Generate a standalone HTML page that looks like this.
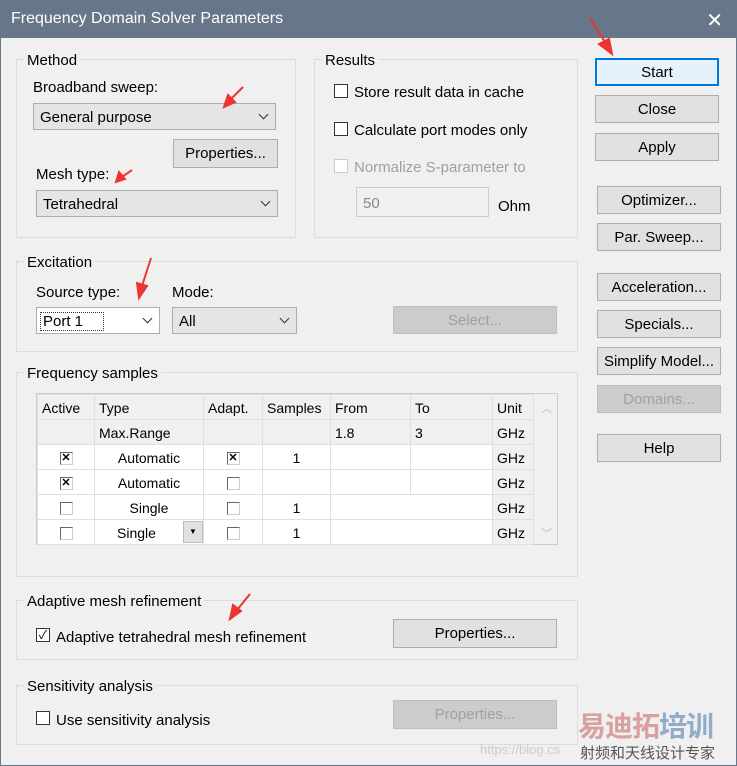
<!DOCTYPE html>
<html><head><style>
*{box-sizing:border-box;margin:0;padding:0}
body{width:737px;height:766px;background:#f0f0f0;font-family:"Liberation Sans","Noto Sans CJK SC",sans-serif;font-size:15px;color:#000;position:relative;overflow:hidden}
.a{position:absolute}
.t{margin-top:2px}
.win{position:absolute;left:0;top:0;width:737px;height:766px;border:1px solid #677689}
.title{left:0;top:0;width:737px;height:38px;background:#677689;color:#fff;font-size:16px;padding:10px 0 0 11px}
.gb{position:absolute;border:1px solid #dcdcdc}
.gl{position:absolute;background:#f0f0f0;padding:0 3px;font-size:15px;margin-top:2px}
.btn{position:absolute;background:#e1e1e1;border:1px solid #adadad;text-align:center;font-size:15px;line-height:28px}
.dis{color:#a0a0a0;background:#cccccc;border-color:#bfbfbf}
.cb{position:absolute;width:14px;height:14px;border:1px solid #333;background:#fff}
.combo{position:absolute;background:#e5e5e5;border:1px solid #adadad;padding-left:6px;line-height:27px}
.combo:after{content:"";position:absolute;right:8px;top:7px;width:6px;height:6px;border-right:1.3px solid #333;border-bottom:1.3px solid #333;transform:rotate(45deg)}
table{border-collapse:collapse;position:absolute;left:37px;top:394px;font-size:14px}
td{border:1px solid #e0e0e0;height:25px;padding:1px 4px 0;background:#fff;vertical-align:middle}
td.h{background:#f0f0f0;text-align:left}
.c{text-align:center}
.sc{display:inline-block;width:13px;height:13px;border:1px solid #666;border-right-color:#ccc;border-bottom-color:#ccc;vertical-align:middle;font-size:11px;line-height:11px;font-weight:bold;text-align:center}
</style></head><body>
<div class="win"></div>
<div class="a title">Frequency Domain Solver Parameters</div>
<div class="a" style="right:14px;top:8px;color:#fff;font-size:20px">✕</div>

<!-- Method -->
<div class="gb" style="left:16px;top:59px;width:280px;height:179px"></div>
<div class="gl" style="left:24px;top:50px">Method</div>
<div class="a t" style="left:33px;top:77px">Broadband sweep:</div>
<div class="combo" style="left:33px;top:103px;width:243px;height:27px">General purpose</div>
<div class="btn" style="left:173px;top:139px;width:105px;height:29px">Properties...</div>
<div class="a t" style="left:36px;top:164px">Mesh type:</div>
<div class="combo" style="left:36px;top:190px;width:242px;height:27px">Tetrahedral</div>

<!-- Results -->
<div class="gb" style="left:314px;top:59px;width:264px;height:179px"></div>
<div class="gl" style="left:322px;top:50px">Results</div>
<div class="cb" style="left:334px;top:84px"></div><div class="a t" style="left:354px;top:82px">Store result data in cache</div>
<div class="cb" style="left:334px;top:122px"></div><div class="a t" style="left:354px;top:120px">Calculate port modes only</div>
<div class="cb" style="left:334px;top:159px;border-color:#ccc"></div><div class="a t" style="left:354px;top:157px;color:#a0a0a0">Normalize S-parameter to</div>
<div class="a" style="left:356px;top:187px;width:133px;height:30px;border:1px solid #ccc;color:#888;padding:7px 0 0 6px">50</div>
<div class="a t" style="left:498px;top:196px">Ohm</div>

<!-- Excitation -->
<div class="gb" style="left:16px;top:261px;width:562px;height:91px"></div>
<div class="gl" style="left:24px;top:252px">Excitation</div>
<div class="a t" style="left:36px;top:282px">Source type:</div>
<div class="a t" style="left:172px;top:282px">Mode:</div>
<div class="combo" style="left:36px;top:307px;width:124px;height:27px;background:#fff;"><span style="border:1px dotted #333;padding:0 20px 0 2px;margin-left:-3px">Port 1</span></div>
<div class="combo" style="left:172px;top:307px;width:125px;height:27px">All</div>
<div class="btn dis" style="left:393px;top:306px;width:164px;height:28px">Select...</div>

<!-- Frequency samples -->
<div class="gb" style="left:16px;top:372px;width:562px;height:205px"></div>
<div class="gl" style="left:24px;top:363px">Frequency samples</div>
<div class="a" style="left:36px;top:393px;width:522px;height:152px;border:1px solid #ccc;background:#f0f0f0"></div>
<table>
<tr><td class="h" style="width:57px">Active</td><td class="h" style="width:109px">Type</td><td class="h" style="width:59px">Adapt.</td><td class="h" style="width:68px">Samples</td><td class="h" style="width:80px">From</td><td class="h" style="width:82px">To</td><td class="h" style="width:41px">Unit</td></tr>
<tr><td class="h"></td><td class="h c">Max.Range</td><td class="h"></td><td class="h"></td><td class="h">1.8</td><td class="h">3</td><td class="h c">GHz</td></tr>
<tr><td class="c"><span class="sc">✕</span></td><td class="c">Automatic</td><td class="c"><span class="sc">✕</span></td><td class="c">1</td><td></td><td></td><td class="h c">GHz</td></tr>
<tr><td class="c"><span class="sc">✕</span></td><td class="c">Automatic</td><td class="c"><span class="sc"></span></td><td></td><td></td><td></td><td class="h c">GHz</td></tr>
<tr><td class="c"><span class="sc"></span></td><td class="c">Single</td><td class="c"><span class="sc"></span></td><td class="c">1</td><td colspan="2"></td><td class="h c">GHz</td></tr>
<tr><td class="c"><span class="sc"></span></td><td style="padding:1px 0 0 22px;position:relative">Single<span style="position:absolute;right:0;top:1px;width:20px;height:22px;background:#e1e1e1;border:1px solid #bbb;font-size:8px;text-align:center;line-height:20px">▼</span></td><td class="c"><span class="sc"></span></td><td class="c">1</td><td colspan="2"></td><td class="h c">GHz</td></tr>
</table>
<div class="a" style="left:541px;top:400px;color:#bbb;font-size:11px">︿</div>
<div class="a" style="left:541px;top:525px;color:#bbb;font-size:11px">﹀</div>

<!-- Adaptive -->
<div class="gb" style="left:16px;top:600px;width:562px;height:60px"></div>
<div class="gl" style="left:24px;top:591px">Adaptive mesh refinement</div>
<div class="cb" style="left:36px;top:628px;font-size:12px;line-height:12px;text-align:center">✓</div>
<div class="a t" style="left:56px;top:627px">Adaptive tetrahedral mesh refinement</div>
<div class="btn" style="left:393px;top:619px;width:164px;height:29px">Properties...</div>

<!-- Sensitivity -->
<div class="gb" style="left:16px;top:685px;width:562px;height:60px"></div>
<div class="gl" style="left:24px;top:676px">Sensitivity analysis</div>
<div class="cb" style="left:36px;top:711px"></div>
<div class="a t" style="left:56px;top:710px">Use sensitivity analysis</div>
<div class="btn dis" style="left:393px;top:700px;width:164px;height:29px">Properties...</div>

<!-- right buttons -->
<div class="btn" style="left:595px;top:58px;width:124px;height:28px;border:2px solid #0078d7;background:#e5f1fb;line-height:26px">Start</div>
<div class="btn" style="left:595px;top:95px;width:124px;height:28px">Close</div>
<div class="btn" style="left:595px;top:133px;width:124px;height:28px">Apply</div>
<div class="btn" style="left:597px;top:186px;width:124px;height:28px">Optimizer...</div>
<div class="btn" style="left:597px;top:223px;width:124px;height:28px">Par. Sweep...</div>
<div class="btn" style="left:597px;top:273px;width:124px;height:28px">Acceleration...</div>
<div class="btn" style="left:597px;top:310px;width:124px;height:28px">Specials...</div>
<div class="btn" style="left:597px;top:347px;width:124px;height:28px">Simplify Model...</div>
<div class="btn dis" style="left:597px;top:385px;width:124px;height:28px">Domains...</div>
<div class="btn" style="left:597px;top:434px;width:124px;height:28px">Help</div>

<!-- arrows -->
<svg class="a" style="left:0;top:0" width="737" height="766">
<g stroke="#e33" stroke-width="2" fill="#e33">
<line x1="243" y1="87" x2="230" y2="100"/><polygon points="224,107 228,95 235,102"/>
<line x1="132" y1="170" x2="122" y2="177"/><polygon points="116,182 119,172 125,179"/>
<line x1="151" y1="258" x2="142" y2="286"/><polygon points="139,298 137,283 147,286"/>
<line x1="250" y1="594" x2="237" y2="610"/><polygon points="230,619 233,605 241,611"/>
<line x1="590" y1="18" x2="605" y2="42"/><polygon points="612,54 599,44 609,39"/>
</g></svg>

<!-- watermark -->
<div class="a" style="left:578px;top:705px;font-size:28px;font-weight:bold;color:#d9a0a0;letter-spacing:-1px">易迪拓<span style="color:#90acc8">培训</span></div>
<div class="a" style="left:480px;top:742px;font-size:13px;color:#ccc">https://blog.cs</div>
<div class="a" style="left:580px;top:742px;font-size:15px;color:#555">射频和天线设计专家</div>
</body></html>
